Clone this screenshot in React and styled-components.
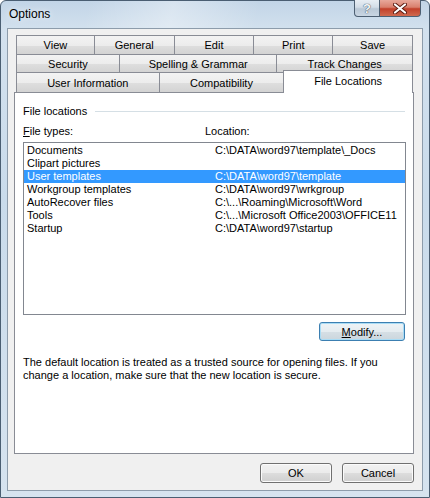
import React from 'react'
import styled, { createGlobalStyle } from 'styled-components'

const GlobalStyle = createGlobalStyle`
  html, body {
    margin: 0;
    padding: 0;
    background: #ffffff;
  }
  body {
    font-family: "Liberation Sans", Arial, sans-serif;
    font-size: 11px;
    color: #000;
  }
`

const Window = styled.div`
  width: 430px;
  height: 498px;
  box-sizing: border-box;
  border: 1px solid #4a5e72;
  border-radius: 6px 6px 0 0;
  background: linear-gradient(180deg, #c2d5e7 0%, #d3e1ee 6%, #c9dbeb 40%, #d6e3ef 100%);
  display: flex;
  flex-direction: column;
`

const TitleBar = styled.div`
  height: 27px;
  display: flex;
  align-items: flex-start;
  padding-left: 8px;
  background: linear-gradient(100deg, rgba(255,255,255,0) 20%, rgba(255,255,255,0.35) 40%, rgba(255,255,255,0) 60%);
`

const Caption = styled.div`
  font-size: 12px;
  line-height: 27px;
  color: #000;
  text-shadow: 0 0 6px rgba(255,255,255,0.9);
`

const CaptionButtons = styled.div`
  margin-left: auto;
  margin-right: 8px;
  display: flex;
  height: 17px;
  margin-top: -1px;
`

const CapButton = styled.div`
  height: 17px;
  width: ${p => p.$w}px;
  box-sizing: border-box;
  border: 1px solid #4d5f72;
  border-top: none;
  display: flex;
  align-items: center;
  justify-content: center;
  border-radius: ${p => p.$radius};
  background: ${p => p.$close
    ? 'linear-gradient(180deg, #e8a89b 0%, #d9806d 45%, #c2402a 55%, #cf6a4f 100%)'
    : 'linear-gradient(180deg, #e8eef4 0%, #d3dde7 45%, #bac8d6 55%, #c9d6e3 100%)'};
  & + & {
    border-left: none;
  }
`

const HelpGlyph = styled.span`
  font-family: "Liberation Sans", Arial, sans-serif;
  font-size: 13px;
  font-weight: bold;
  color: #f4f7fa;
  text-shadow: 0 0 1px #3b4b5c, 0 0 1px #3b4b5c;
  line-height: 1;
`

const Body = styled.div`
  flex: 1;
  margin: 0 6px 6px 6px;
  border: 1px solid #8d9cab;
  background: #f0f0f0;
  padding: 6px 8px 7px 6px;
  display: flex;
  flex-direction: column;
`

const TabStrip = styled.div`
  margin: 0 1px 0 2px;
  display: flex;
  flex-direction: column;
`

const TabRow = styled.div`
  display: flex;
  height: ${p => p.$h}px;
  align-items: flex-start;
`

const Tab = styled.div`
  flex: ${p => p.$w} 0 0;
  height: ${p => p.$h + 1}px;
  box-sizing: border-box;
  border: 1px solid #898c95;
  border-bottom: none;
  margin-left: -1px;
  &:first-child { margin-left: 0; }
  background: linear-gradient(180deg, #f3f3f3 0%, #ececec 50%, #dedede 51%, #d2d2d2 100%);
  display: flex;
  align-items: center;
  justify-content: center;
  padding-bottom: 1px;
  white-space: nowrap;
`

const ActiveTab = styled(Tab)`
  position: relative;
  z-index: 1;
  height: ${p => p.$h + 3}px;
  margin-top: -2px;
  background: #ffffff;
  padding-bottom: 2px;
`

const Panel = styled.div`
  height: 362px;
  box-sizing: border-box;
  border: 1px solid #898c95;
  background: #ffffff;
  padding: 11px 7px 0 8px;
  display: flex;
  flex-direction: column;
`

const GroupHeader = styled.div`
  display: flex;
  align-items: center;
  gap: 8px;
  height: 14px;
  padding-right: 1px;
`

const GroupLine = styled.div`
  flex: 1;
  height: 1px;
  background: #d5dfe5;
`

const ColumnLabels = styled.div`
  margin-top: 6px;
  height: 14px;
  display: grid;
  grid-template-columns: 182px 1fr;
  align-items: center;
`

const Key = styled.span`
  text-decoration: underline;
  text-underline-offset: 1px;
`

const ListBox = styled.div`
  margin-top: 4px;
  height: 173px;
  box-sizing: border-box;
  border: 1px solid #828790;
  padding: 1px 0;
  background: #fff;
`

const ListRow = styled.div`
  height: 13px;
  line-height: 13px;
  display: grid;
  grid-template-columns: 188px 1fr;
  padding-left: 3px;
  white-space: nowrap;
  background: ${p => (p.$selected ? '#3399ff' : 'transparent')};
  color: ${p => (p.$selected ? '#ffffff' : '#000000')};
`

const ButtonRow = styled.div`
  display: flex;
  justify-content: flex-end;
  gap: 10px;
  margin-top: ${p => p.$top}px;
  padding-right: ${p => p.$right || 0}px;
`

const PushButton = styled.button`
  width: ${p => p.$w}px;
  height: ${p => p.$h}px;
  box-sizing: border-box;
  font-family: "Liberation Sans", Arial, sans-serif;
  font-size: 11px;
  color: #000;
  padding: 0;
  border-radius: 3px;
  border: 1px solid ${p => (p.$focus ? '#3c7fb1' : '#707070')};
  box-shadow: inset 0 0 0 1px ${p => (p.$focus ? '#a9dcf5' : '#fbfbfb')};
  background: ${p => p.$focus
    ? 'linear-gradient(180deg, #eef3f6 0%, #e5ecf0 50%, #d6dfe5 51%, #cbd6dd 100%)'
    : 'linear-gradient(180deg, #f2f2f2 0%, #ebebeb 50%, #dddddd 51%, #cfcfcf 100%)'};
`

const Notice = styled.p`
  margin: 15px 0 0 0;
  line-height: 13px;
  width: 380px;
`

const tabRows = [
  { h: 19, tabs: [['View', 78], ['General', 80], ['Edit', 80], ['Print', 79], ['Save', 80]] },
  { h: 18, tabs: [['Security', 103], ['Spelling & Grammar', 158], ['Track Changes', 136]] },
  { h: 20, tabs: [['User Information', 143], ['Compatibility', 125], ['File Locations', 129, true]] },
]

const fileTypes = [
  ['Documents', 'C:\\DATA\\word97\\template\\_Docs'],
  ['Clipart pictures', ''],
  ['User templates', 'C:\\DATA\\word97\\template', true],
  ['Workgroup templates', 'C:\\DATA\\word97\\wrkgroup'],
  ['AutoRecover files', 'C:\\...\\Roaming\\Microsoft\\Word'],
  ['Tools', 'C:\\...\\Microsoft Office2003\\OFFICE11'],
  ['Startup', 'C:\\DATA\\word97\\startup'],
]

export default function App() {
  return (
    <>
      <GlobalStyle />
      <Window>
        <TitleBar>
          <Caption>Options</Caption>
          <CaptionButtons>
            <CapButton $w={26} $radius="0 0 0 4px">
              <HelpGlyph>?</HelpGlyph>
            </CapButton>
            <CapButton $w={41} $close $radius="0 0 4px 0">
              <svg width="14" height="11" viewBox="0 0 14 11">
                <path d="M2 1.5 L12 9.5 M12 1.5 L2 9.5" stroke="#5a1a10" strokeWidth="4" strokeLinecap="round" />
                <path d="M2 1.5 L12 9.5 M12 1.5 L2 9.5" stroke="#ffffff" strokeWidth="2.2" strokeLinecap="round" />
              </svg>
            </CapButton>
          </CaptionButtons>
        </TitleBar>
        <Body>
          <TabStrip>
            {tabRows.map((row, i) => (
              <TabRow key={i} $h={row.h}>
                {row.tabs.map(([label, w, active]) =>
                  active ? (
                    <ActiveTab key={label} $w={w} $h={row.h}>{label}</ActiveTab>
                  ) : (
                    <Tab key={label} $w={w} $h={row.h}>{label}</Tab>
                  )
                )}
              </TabRow>
            ))}
          </TabStrip>
          <Panel>
            <GroupHeader>
              <span>File locations</span>
              <GroupLine />
            </GroupHeader>
            <ColumnLabels>
              <span><Key>F</Key>ile types:</span>
              <span>Location:</span>
            </ColumnLabels>
            <ListBox>
              {fileTypes.map(([name, loc, sel]) => (
                <ListRow key={name} $selected={sel}>
                  <span>{name}</span>
                  <span>{loc}</span>
                </ListRow>
              ))}
            </ListBox>
            <ButtonRow $top={7} $right={1}>
              <PushButton $w={86} $h={19} $focus><Key>M</Key>odify...</PushButton>
            </ButtonRow>
            <Notice>
              The default location is treated as a trusted source for opening files. If you
              change a location, make sure that the new location is secure.
            </Notice>
          </Panel>
          <ButtonRow $top={9}>
            <PushButton $w={72} $h={20}>OK</PushButton>
            <PushButton $w={72} $h={20}>Cancel</PushButton>
          </ButtonRow>
        </Body>
      </Window>
    </>
  )
}
